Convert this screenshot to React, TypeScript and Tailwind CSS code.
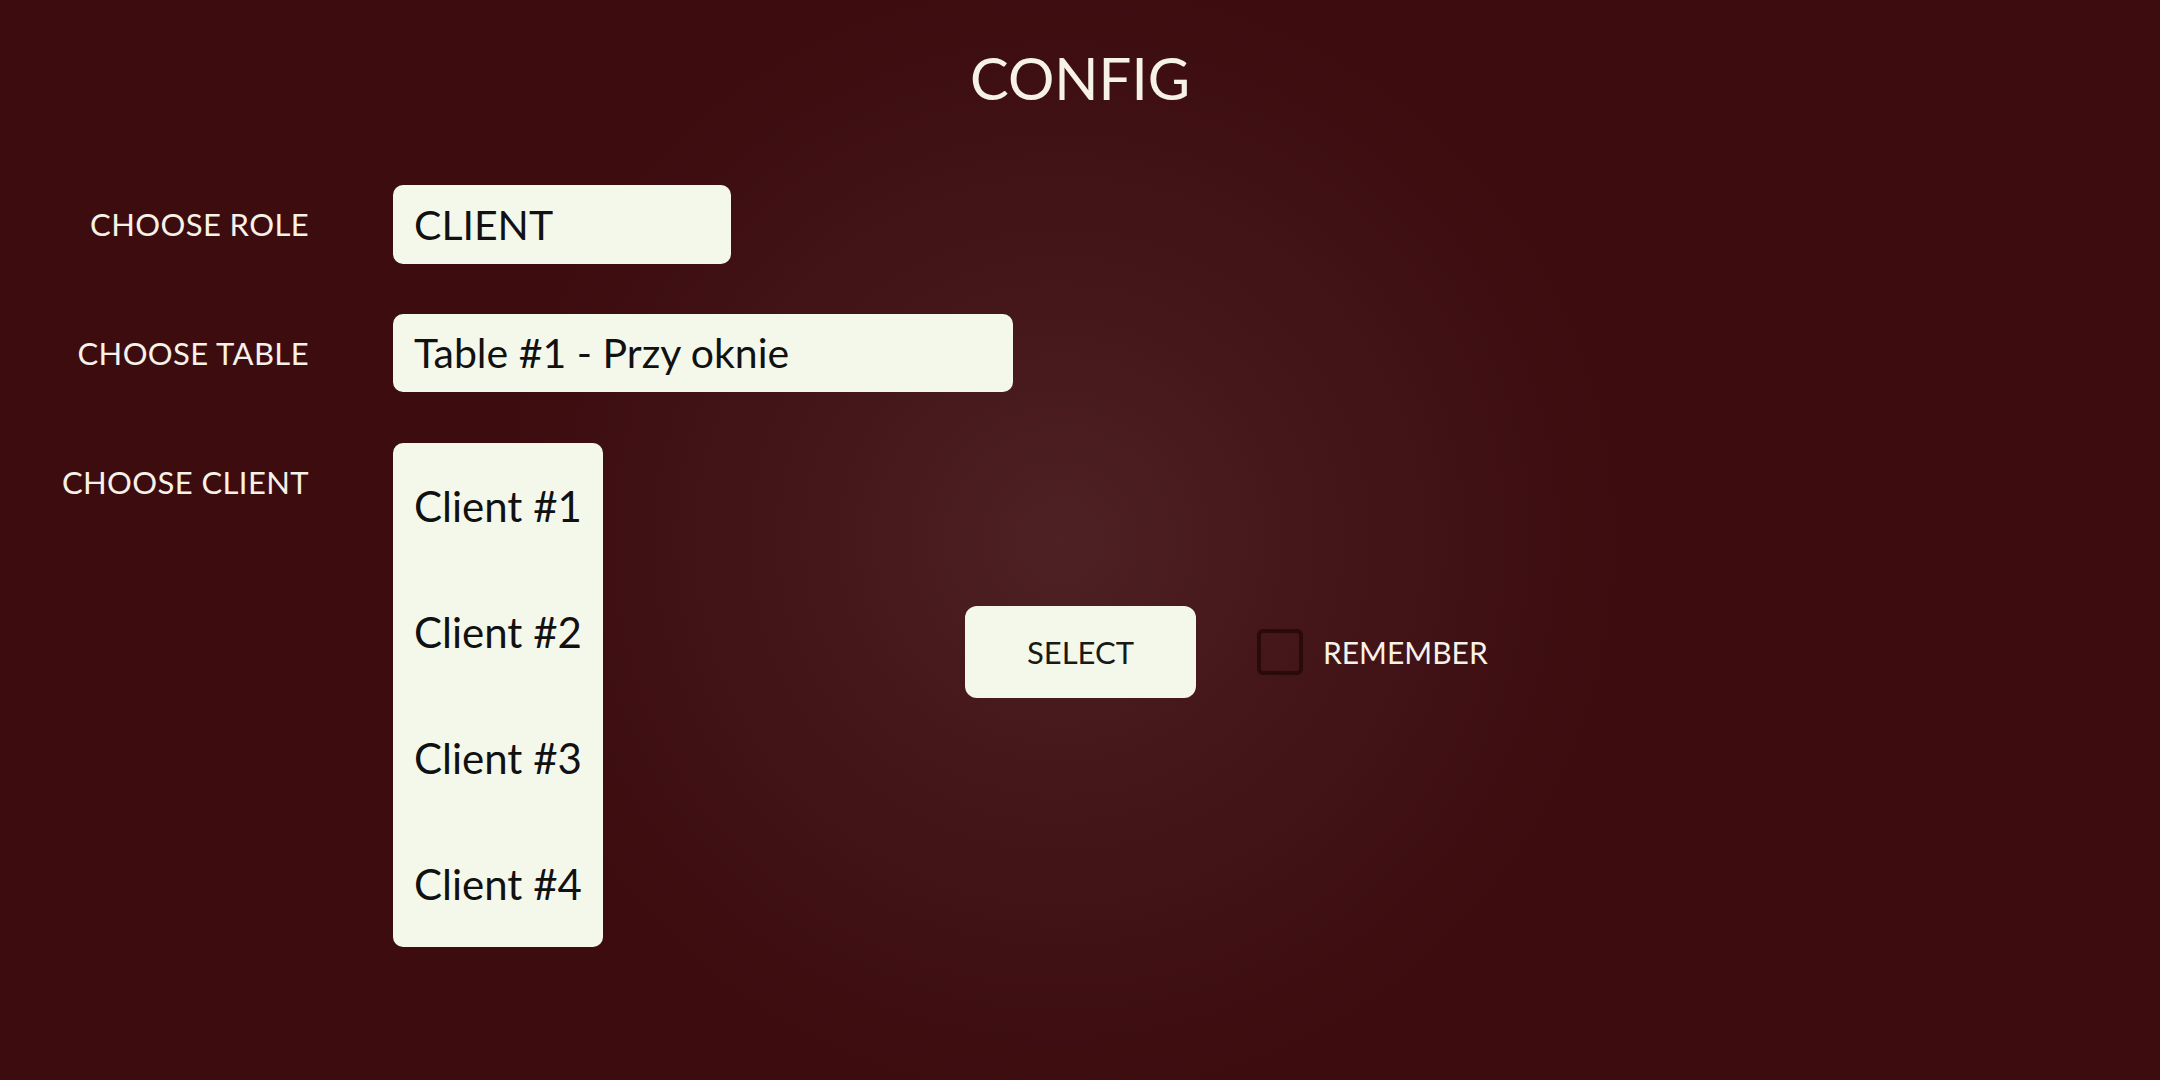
import { useState } from 'react';

const clients = ['Client #1', 'Client #2', 'Client #3', 'Client #4'];

function Label({ children }: { children: React.ReactNode }) {
  return (
    <div className="h-[79px] flex items-center justify-end text-[31px] tracking-[0.4px] text-[#f7f2e8]">
      {children}
    </div>
  );
}

export default function App() {
  const [remember, setRemember] = useState(false);

  return (
    <div
      className="w-full h-[1080px] overflow-hidden bg-[#3c0c0f] bg-[radial-gradient(circle_at_1060px_540px,#4e2124_0px,#44161a_260px,#3c0c0f_560px)]"
      style={{ fontFamily: 'Lato, "Noto Sans", sans-serif' }}
    >
      <h1 className="pt-[49px] text-center text-[58px] leading-none text-[#f7f2e8]">CONFIG</h1>

      <div className="mt-[78px] grid grid-cols-[309px_auto] gap-x-[84px] gap-y-[50px] items-start">
        <Label>CHOOSE ROLE</Label>
        <div className="w-[338px] h-[79px] flex items-center pl-[21px] rounded-[10px] bg-[#f4f8eb] text-[41px] text-[#111111]">
          CLIENT
        </div>

        <Label>CHOOSE TABLE</Label>
        <div className="w-[620px] h-[78px] flex items-center pl-[21px] rounded-[10px] bg-[#f4f8eb] text-[41px] text-[#111111]">
          Table #1 - Przy oknie
        </div>

        <Label>CHOOSE CLIENT</Label>
        <div className="flex items-start">
          <div className="w-[210px] h-[504px] flex flex-col rounded-[10px] bg-[#f4f8eb] text-[42px] text-[#111111]">
            {clients.map((c) => (
              <div key={c} className="h-[126px] flex items-center pl-[21px]">
                {c}
              </div>
            ))}
          </div>

          <div className="ml-[362px] mt-[163px] flex items-center">
            <button className="w-[231px] h-[92px] rounded-[12px] bg-[#f4f8eb] text-[31px] text-[#1a1a14]">
              SELECT
            </button>
            <button
              onClick={() => setRemember(!remember)}
              className="ml-[61px] w-[46px] h-[46px] rounded-[6px] border-4 border-[#2a0a0b]"
            />
            <span className="ml-[20px] text-[30px] text-[#f7f2e8]">REMEMBER</span>
          </div>
        </div>
      </div>
    </div>
  );
}
